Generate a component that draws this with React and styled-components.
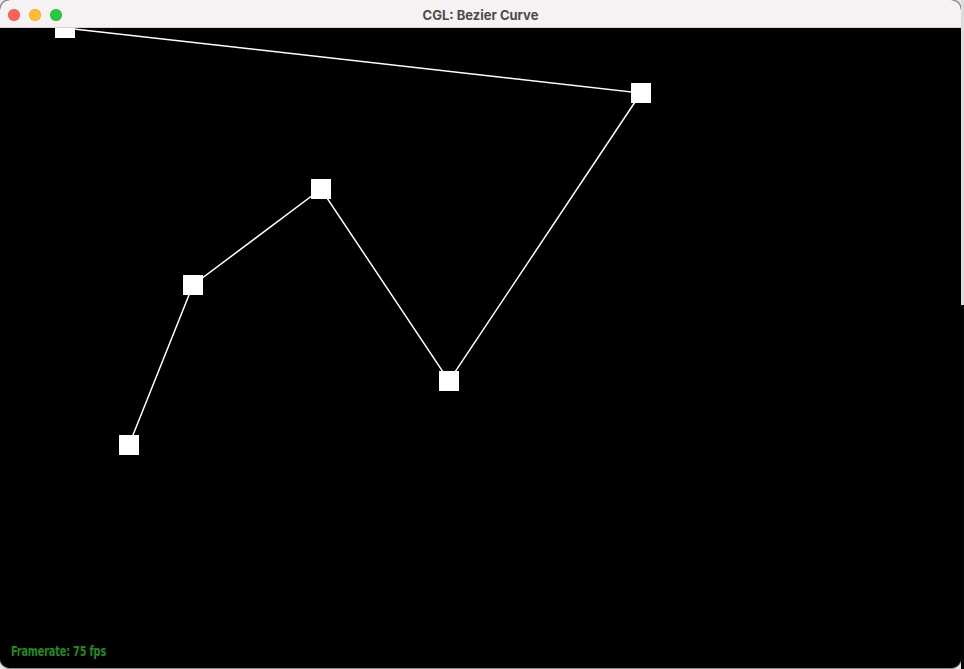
import React from "react";
import styled, { createGlobalStyle } from "styled-components";

const Global = createGlobalStyle`
  html, body { margin: 0; padding: 0; background: #e6e6e6; overflow: hidden; }
  body { font-family: "Inter", "Liberation Sans", sans-serif; }
`;

const Desktop = styled.div`
  display: flex;
  width: 964px;
  height: 669px;
`;

const Window = styled.div`
  width: 961px;
  height: 668px;
  display: flex;
  flex-direction: column;
  border-radius: 10px;
  overflow: hidden;
  box-shadow: 0 0 0 1px #8a8a8a;
  background: #000;
  flex-shrink: 0;
`;

const TitleBar = styled.div`
  height: 28px;
  flex-shrink: 0;
  background: #f6f1f3;
  border-bottom: 1px solid #d8d2d4;
  box-sizing: border-box;
  display: flex;
  align-items: center;
  position: relative;
  padding-left: 8px;
  gap: 9px;
`;

const Light = styled.span`
  width: 12px;
  height: 12px;
  border-radius: 50%;
  background: ${(p) => p.$c};
  box-shadow: inset 0 0 0 0.5px rgba(0, 0, 0, 0.15);
  margin-top: 2px;
`;

const Title = styled.div`
  position: absolute;
  left: 0;
  right: 0;
  top: 0;
  bottom: 0;
  display: flex;
  align-items: center;
  justify-content: center;
  font-size: 13px;
  font-weight: 700;
  color: #4c4a4b;
  padding-top: 2px;
  pointer-events: none;
`;

const Canvas = styled.div`
  flex: 1;
  position: relative;
  background: #000;
`;

const Scene = styled.svg`
  display: block;
  width: 100%;
  height: 100%;
`;

const Framerate = styled.div`
  position: absolute;
  left: 11px;
  bottom: 9px;
  font-family: "DejaVu Sans Condensed", "DejaVu Sans", sans-serif;
  font-stretch: condensed;
  font-weight: 700;
  font-size: 13.5px;
  color: #1f8c1f;
  letter-spacing: -0.2px;
  transform: scaleX(0.8);
  transform-origin: left center;
  white-space: nowrap;
`;

const Side = styled.div`
  flex: 1;
  display: flex;
  flex-direction: column;
`;

const SideTop = styled.div`
  height: 305px;
  background: #dcdcdc;
`;

const SideBottom = styled.div`
  flex: 1;
  background: #050505;
`;

const points = [
  [129, 445],
  [193, 285],
  [321, 189],
  [449, 381],
  [641, 93],
  [65, 28],
].map(([x, y]) => [x, y - 28]);

export default function App() {
  return (
    <>
      <Global />
      <Desktop>
        <Window>
          <TitleBar>
            <Light $c="#fe5f57" />
            <Light $c="#febc2e" />
            <Light $c="#28c840" />
            <Title>CGL: Bezier Curve</Title>
          </TitleBar>
          <Canvas>
            <Scene viewBox="0 0 961 640" preserveAspectRatio="xMinYMin slice">
              <polyline
                points={points.map((p) => p.join(",")).join(" ")}
                fill="none"
                stroke="#fff"
                strokeWidth="1.5"
              />
              {points.map(([x, y], i) => (
                <rect key={i} x={x - 10} y={y - 10} width="20" height="20" fill="#fff" />
              ))}
            </Scene>
            <Framerate>Framerate: 75 fps</Framerate>
          </Canvas>
        </Window>
        <Side>
          <SideTop />
          <SideBottom />
        </Side>
      </Desktop>
    </>
  );
}
